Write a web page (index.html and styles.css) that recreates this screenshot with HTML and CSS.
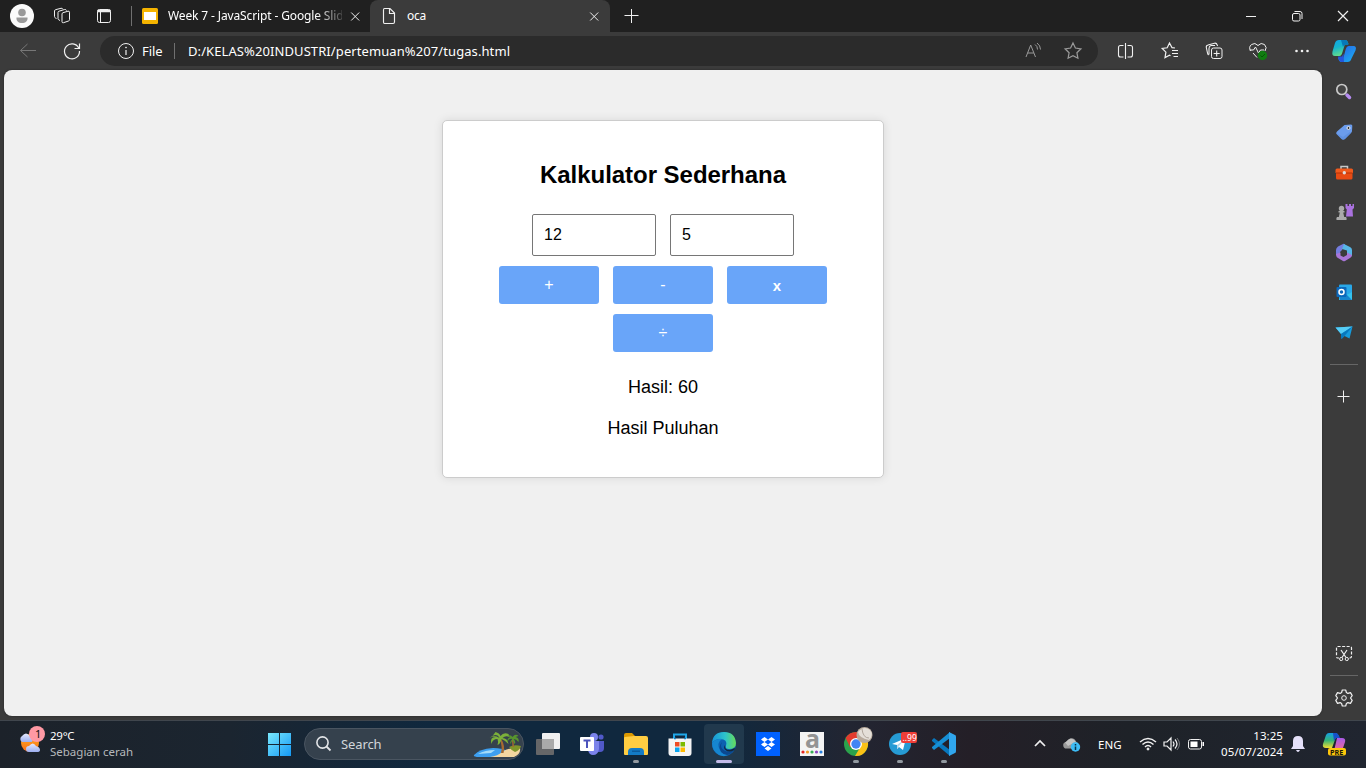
FILE: index.html
```html
<!DOCTYPE html>
<html lang="en">
<head>
<meta charset="utf-8">
<title>oca</title>
<link rel="stylesheet" href="styles.css">
</head>
<body>
<div class="screen">
  <header class="titlebar">
    <svg class="ic avatar" viewBox="0 0 24 24"><circle cx="12" cy="12" r="12" fill="#fafafa"/><circle cx="12" cy="8.500" r="3.800" fill="#999"/><path d="M6.500 13.500h11c.5 3.500-2 5.500-5.500 5.500s-6-2-5.500-5.500z" fill="#999"/></svg>
    <svg class="ic workspaces line" viewBox="0 0 24 24"><path d="M12 10q0-1 1-1.300l5-1.500q1.500-.3 1.500 1v7.500q0 1-1 1.300l-5 1.700q-1.500.3-1.500-1zM10 16.500l-1-.5q-1-.5-1-1.500V8.500q0-1 1-1.300l5.500-1.700q1.500-.3 2 1M6.500 14.500l-1-.5q-1-.5-1-1.500V7q0-1 1-1.300L11 4.300q1.300-.3 1.800.7"/></svg>
    <svg class="ic tabs-menu line" viewBox="0 0 24 24"><rect x="5.500" y="5.500" width="13" height="13" rx="2"/><path d="M5.500 7h13" stroke-width="2.500"/><path d="M8.500 8v10"/></svg>
    <i class="sep tall"></i>
    <svg class="slides" viewBox="0 0 16 16"><rect width="16" height="16" rx="1.500" fill="#f5b400"/><rect x="2" y="4" width="12" height="8" fill="#fff"/></svg>
    <span class="tab-title faded">Week 7 - JavaScript - Google Slid</span>
    <svg class="tab-close line" viewBox="0 0 20 20"><path d="m6.200 6.500 8 8m-8 0 8-8"/></svg>
    <div class="tab">
      <svg class="file line" viewBox="0 0 20 20"><path d="M5.500 2.500h5.500l4.500 4.500v9q0 1.500-1.500 1.500H5.500Q4.500 17.500 4.500 16V4q0-1.500 1-1.500zM10.500 2.500V7.500h5" stroke-width="1.150"/></svg>
      <span class="tab-title">oca</span>
      <svg class="tab-close line last" viewBox="0 0 20 20"><path d="m6.200 6.500 8 8m-8 0 8-8"/></svg>
    </div>
    <svg class="ic new-tab line" viewBox="0 0 24 24"><path d="M11.500 5v14M4.500 11.500h14"/></svg>
    <div class="window-buttons">
      <svg viewBox="0 0 46 32" class="line"><path d="M18 16.500h10"/></svg>
      <svg viewBox="0 0 46 32" class="line"><rect x="18.500" y="13.500" width="7.500" height="7.500" rx="1.500"/><path d="M20.500 11.500h5.500q2 0 2 2v5.500"/></svg>
      <svg viewBox="0 0 46 32" class="line"><path d="m18 11 10 10m-10 0 10-10" stroke-width="1.200"/></svg>
    </div>
  </header>

  <nav class="toolbar">
    <svg class="ic back line dim" viewBox="0 0 24 24"><path d="M20 11.500H4.500m7-6.500-7 6.500 7 6.500"/></svg>
    <svg class="ic refresh line" viewBox="0 0 24 24"><path d="M18.700 9A7.500 7.500 0 1 0 19.500 12M19.500 4.500v5h-5" stroke-width="1.200"/></svg>
    <div class="address">
      <svg class="info line" viewBox="0 0 20 20"><circle cx="10" cy="10" r="7.500"/><path d="M10 9v5" stroke-width="1.200"/><circle cx="10" cy="6.500" r=".5"/></svg>
      <span class="scheme">File</span>
      <i class="sep"></i>
      <span class="url">D:/KELAS%20INDUSTRI/pertemuan%207/tugas.html</span>
      <svg class="ic read line mid" viewBox="0 0 24 24"><path d="m5 18 4.700-12L14.500 18M6.700 14h6.100M14 5.500q2.500 1.500 2.500 5M16 4q3.500 2.500 3.500 6.500"/></svg>
      <svg class="ic star line mid" viewBox="0 0 24 24"><path d="m12 4 2.400 5 5.500.8-4 3.900 1 5.500-4.900-2.600-4.900 2.600 1-5.500-4-3.900 5.500-.8z" stroke-width="1.200"/></svg>
    </div>
    <svg class="ic split line" viewBox="0 0 24 24"><path d="M9.500 6.500h-3q-2 0-2 2v7.500q0 2 2 2h3m4-11.500h3q2 0 2 2v7.500q0 2-2 2h-3M11.500 4v16" stroke-width="1.100"/></svg>
    <svg class="ic favs line" viewBox="0 0 24 24"><path d="m17 9-3-.4L11.500 4 9.200 8.800l-5 .7 3.700 3.600-.9 5.500 4.500-2.400 1 .6M14 11.500h6M14 14.500h6M15.500 17.500H20" stroke-width="1.200"/></svg>
    <svg class="ic collections line" viewBox="0 0 24 24"><rect x="9.500" y="9" width="10.500" height="10.500" rx="2"/><path d="M14.700 11.500v6m-3-3h6M6.500 16Q5.800 15.500 5.500 14L4.300 8.500Q4 6.500 6 6l6.500-1.800q2-.5 2.800 2l.2.8M7 15.500v-6q0-2.500 2-3h4" stroke-width="1.100"/></svg>
    <svg class="ic heart" viewBox="0 0 24 24"><path class="line" d="M5 12Q2 8.500 5.500 5.500 9 3 12 6.500 15 3 18.500 5.500 21.500 8.500 19 12M3.500 11h4l2-3 3 6 2-3H18M7 14l4 4.500" stroke-width="1.200"/><circle cx="16.500" cy="16.500" r="4.700" fill="#107c10"/><path d="m14.500 16.500 1.500 1.500 3-3" fill="none" stroke="#055505"/></svg>
    <svg class="ic dots" viewBox="0 0 24 24" fill="#f2f2f2"><circle cx="6.500" cy="12" r="1.300"/><circle cx="12" cy="12" r="1.300"/><circle cx="17.500" cy="12" r="1.300"/></svg>
    <svg class="ic copilot" viewBox="0 0 24 24"><defs>
      <linearGradient id="cpA" x2=".3" y2="1"><stop stop-color="#10a5e8"/><stop offset=".5" stop-color="#16b5cd"/><stop offset="1" stop-color="#62dc8c"/></linearGradient>
      <linearGradient id="cpB" x2="1" y2="1"><stop stop-color="#2b5ce6"/><stop offset="1" stop-color="#18b4f2"/></linearGradient></defs>
      <path d="M13 5h3.500q-1-4-3.500-4H7Q4 1 3 4L.5 12.500Q-.5 17 3 17h4.500q2 0 3-4z" fill="url(#cpA)"/><path d="M9 1h5q1.500 0 2.500 5H13q-1.500 0-2 2z" fill="#0878b8"/><path d="M11.500 18.500H6Q7 23 9.500 23h6q3 0 4-3.500l4-8Q25 7 21.500 7H17q-2.500 0-3.500 4z" fill="url(#cpB)"/><path d="M6 17.500h4l1.500-3 .5 8.500H10q-3 0-4-5.500z" fill="#2456dd"/></svg>
  </nav>

  <div class="workspace">
    <main class="page">
      <section class="calculator">
        <h2>Kalkulator Sederhana</h2>
        <div class="row inputs"><input type="text" value="12"><input type="text" value="5"></div>
        <div class="row buttons"><button>+</button><button>-</button><button class="times">x</button><button>÷</button></div>
        <p class="result">Hasil: 60</p>
        <p class="result">Hasil Puluhan</p>
      </section>
    </main>
    <aside class="sidebar">
      <svg class="ic" viewBox="0 0 24 24"><path d="m15 15 2.500 2.500" stroke="#b58cf0" stroke-width="3.500" stroke-linecap="round"/><circle cx="9.800" cy="9.500" r="5" fill="#444" stroke="#c9c9c9" stroke-width="1.700"/></svg>
      <svg class="ic" viewBox="0 0 24 24"><path d="M12.500 5 19 4.500q1.500 0 1.300 1.500l-.3 5q0 1-1 2l-6 6q-2 1.500-3.500 0l-5-5Q3.500 13 5 11.500z" fill="#6b9cec"/><path d="m4 13 5.500 6q2 1.500 3.500 0l6-6-1-1-7 5z" fill="#5386d8" opacity=".5"/><circle cx="16.500" cy="8" r="1.500" fill="#333" stroke="#e8edf4"/></svg>
      <svg class="ic" viewBox="0 0 24 24"><path d="M9 9V6.500h6.500V9" fill="none" stroke="#c8c8c8" stroke-width="1.500"/><rect x="4" y="9" width="16.500" height="10.500" rx="1.500" fill="#e84b13"/><path d="M3.500 10Q3.500 8.500 5 8.500h14.500Q21 8.500 21 10v3H3.500z" fill="#f05a1d"/><path d="M4 13h16.500" stroke="#b53207"/><circle cx="12.300" cy="12.700" r="1.700" fill="#ddd"/></svg>
      <svg class="ic" viewBox="0 0 24 24"><path d="M13.500 4h2v2H17V4h2v2h1.500V4H22v4l-1.500 1.500.5 7h-7l.8-7L13.500 8z" fill="#aa72df"/><g fill="#aaa"><circle cx="9.500" cy="8.500" r="2.700"/><path d="M6.500 11h6v1.500h-1.300l1 4.500h1.800q1 1 .5 3h-10q-.5-2 .5-3h1.800l1-4.500H6.500z"/></g></svg>
      <svg class="ic m365" viewBox="0 0 24 24"><path d="m6 5.500 5-2.500q1-.5 2 .5L10 9l-2 2v6l-3-2q-1-.5-1-2V9q0-2 2-3.500z" fill="#747ddf"/><path d="m12 3 6 3q2 1 2 3v6l-5-3V9.500L10 8z" fill="#56b6e7"/><path d="m4 13 4.500-1.500v3l3 1.500 3.500-2v-2.500l5 2.500q0 2-2 3l-5 3q-1 .5-2 0l-5-3q-2-1-2-4z" fill="#a976d8"/></svg>
      <svg class="ic" viewBox="0 0 24 24"><rect x="7" y="4.500" width="13" height="15" rx="1" fill="#29a8e8"/><path d="m7 13 6 3 7-4v8H7z" fill="#34c2ec"/><path d="M7 15h8l5 5H8z" fill="#1684cd"/><rect x="4.500" y="7" width="10" height="10" rx="1" fill="#0b68bb"/><circle cx="9.500" cy="12" r="2.500" fill="none" stroke="#fff" stroke-width="1.500"/></svg>
      <svg class="ic" viewBox="0 0 24 24"><path d="m3.500 7.500 17-1-3 12-5-2.500-3 3-.5-5z" fill="#159bdc"/><path d="m3.500 7.500 17-1L9 14z" fill="#56cdf6"/><path d="m9.500 19-.5-5 11.500-7.500-8 9.500z" fill="#0878bd"/></svg>
      <hr>
      <svg class="ic plus line" viewBox="0 0 24 24"><path d="M11.500 6.500v12M5.500 12.500h12"/></svg>
      <svg class="ic snip line" viewBox="0 0 24 24"><path d="M7 17H5.500Q4.500 17 4.500 15V7q0-1.500 1.500-1.500h12q1.500 0 1.500 1.500v8q0 2-1.500 2H17" stroke-dasharray="3 1.500" stroke-width="1.200"/><path d="m9 9 5 7.500m1-7.500-5 7.500" stroke-width="1.200"/><circle cx="9.200" cy="18" r="1.600"/><circle cx="14.800" cy="18" r="1.600"/></svg>
      <hr class="lower">
      <svg class="ic gear line" viewBox="0 0 24 24"><path d="M10.300 4h3.400l.7 2.500 1.500.9 2.600-.8 1.700 3-1.700 2.400 1.700 2.400-1.700 3-2.600-.8-1.500.9-.7 2.500h-3.400l-.7-2.500-1.500-.9-2.600.8-1.700-3L5.500 12 3.800 9.600l1.700-3 2.600.8 1.500-.9z" stroke-linejoin="round" stroke-width="1.200"/><circle cx="12" cy="12" r="2.300"/></svg>
    </aside>
  </div>

  <footer class="taskbar">
    <svg class="weather" viewBox="0 0 30 30"><defs><linearGradient id="sun" x2="0" y2="1"><stop stop-color="#ffb21e"/><stop offset="1" stop-color="#f76b1c"/></linearGradient><linearGradient id="cloud" x2="0" y2="1"><stop stop-color="#e6eaff"/><stop offset="1" stop-color="#9baef0"/></linearGradient></defs><circle cx="13" cy="17" r="9" fill="url(#sun)"/><path d="M5 16a3.500 3.500 0 0 1 0-6q4-5 8 0 4 2 2 6z" fill="url(#cloud)"/><path d="M12 26a3 3 0 0 1 0-6q4-5 7 0 4 1 4 4 0 2-3 2z" fill="url(#cloud)"/><circle cx="20" cy="8" r="8" fill="#ff99a4"/><text x="18" y="12" font-size="11" fill="#111">1</text></svg>
    <div class="weather-text"><span>29°C</span><span class="soft">Sebagian cerah</span></div>
    <svg class="app start" viewBox="0 0 24 24"><defs><linearGradient id="win" gradientUnits="userSpaceOnUse" x1="0" y1="0" x2="24" y2="24"><stop stop-color="#7beafd"/><stop offset="1" stop-color="#1297f5"/></linearGradient></defs><path d="M0 1h11v11H0zm12 0h11v11H12zM0 13h11v11H0zm12 0h11v11H12z" fill="url(#win)"/></svg>
    <div class="search">
      <svg class="search-icon" viewBox="0 0 18 18"><circle cx="7.500" cy="7.500" r="5.600" fill="none" stroke="#e2e4e7" stroke-width="1.600"/><path d="m11.500 11.500 4 4" stroke="#e2e4e7" stroke-width="1.800"/></svg>
      <span>Search</span>
      <svg class="island" viewBox="0 0 49 28"><path d="M1 25q5-6 19-7 12 0 20 6l-6 3H6q-6 0-5-2z" fill="#3d9ff0"/><path d="M5 24q7-4 17-4l-4 3z" fill="#a4dcfa"/><path d="M17 27q8-1 12-5 8-5 18-4 1 6-6 9z" fill="#f3d6a0"/><path d="M36 17q5-3 12-1-1 4-6 6-4-2-6-5z" fill="#7f952a"/><path d="M26 8q4 6 2 15h2.500q2-8-3-15zM39 9l.5 8H41l-.7-8z" fill="#a66a31"/><path d="M26.500 8q-2-5-7-2l3-4q4 1 5 4 3-4 8-2l1 3q-4-2-7 1 5 0 6 6-4-4-7-5-1 5-4 6 1-4 0-6-5 0-6 5-2-7 4-7-3-1-6 1 4-4 10 0z" fill="#7cb13a"/><path d="M39.500 9q-4-1-5 3-1-4 3-5l-3-1q3-2 5 1 3-4 6-1l-3 1q4 1 3 5-2-3-5-3 3 3 1 5l-2-4-2 4q-1-3 2-5z" fill="#58952e"/></svg>
    </div>
    <div class="apps">
      <div class="slot"><svg class="app" viewBox="0 0 24 24"><rect x="6" y="1" width="18" height="16" rx="1" fill="#f0f0f0"/><rect y="7" width="18" height="16" rx="1" fill="#656668"/><path d="M6 7h12v10H6z" fill="#aaa"/></svg></div>
      <div class="slot"><svg class="app" viewBox="0 0 24 24"><circle cx="14" cy="5" r="4" fill="#7b83eb"/><circle cx="21" cy="5" r="2.600" fill="#5059c9"/><path d="M16 9h8v7q0 4-4 4h-4z" fill="#5059c9"/><path d="M8 9h11v8q-1 6-6 6-4 0-5-5z" fill="#7b83eb"/><rect y="5" width="14" height="14" rx="1" fill="#fff"/><path d="M3.500 8.500h7M7 8.500V16" stroke="#4b53bc" stroke-width="2"/></svg></div>
      <div class="slot open"><svg class="app" viewBox="0 0 24 24"><path d="M0 3q0-2 2-2h6l3 3v5H0z" fill="#dc9900"/><path d="M0 6q0-1 1-1l9-1h12q2 0 2 2v16q0 1-1 1H1q-1 0-1-1z" fill="#ffcd42"/><path d="M4 23v-3q0-4 4-4h8q4 0 4 4v3z" fill="#137bc6"/><path d="M8 18.500h8v1.500H8z" fill="#0b5b9d"/></svg></div>
      <div class="slot"><svg class="app" viewBox="0 0 24 24"><path d="M6 7V2.500h12V7" fill="none" stroke="#20a7e8" stroke-width="2"/><path d="M.5 6.500h23V21q0 3-3 3h-17q-3 0-3-3z" fill="#f4f4f4"/><path d="M6 6.500h2M16 6.500h2" stroke="#1582c4" stroke-width="1.500"/><path fill="#ef4c24" d="M7 10h4.500v4.500H7z"/><path fill="#7cbb00" d="M12.500 10H17v4.500h-4.500z"/><path fill="#09a4ef" d="M7 15.500h4.500V20H7z"/><path fill="#ffba00" d="M12.500 15.500H17V20h-4.500z"/></svg></div>
      <div class="slot active"><svg class="app" viewBox="0 0 24 24"><defs><linearGradient id="edge"><stop stop-color="#1794d7"/><stop offset=".55" stop-color="#2dc3cc"/><stop offset="1" stop-color="#67dc58"/></linearGradient></defs><circle cx="12" cy="12" r="12" fill="#0d61b1"/><path d="M0 11Q1 0 12 0q11 0 12 11 0 6-7 6-4 0-3-3 2-7-6-7-5 0-8 4z" fill="url(#edge)"/><path d="M0 11q5-5 10-4-6 4-2 11 4 6 11 3-5 5-12 2Q0 19 0 11z" fill="#1686d0"/><path d="M10 10q-3 6 3 9 4 2 9-1-6 9-13 2-3-6 1-10z" fill="#0b4890"/><path d="M13 13q-1 5 5 5l5-2-.5 2q-6 3-9 0-2.500-2-.5-5z" fill="#11263a"/></svg></div>
      <div class="slot"><svg class="app" viewBox="0 0 24 24"><path fill="#0061fe" d="M0 0h24v24H0z"/><path d="m8.500 5 3.500 2.500L8.500 10 5 7.500zm7 0L19 7.500 15.500 10 12 7.500zm-7 5 3.500 2.500L8.500 15 5 12.500zm7 0 3.500 2.500-3.500 2.500-3.500-2.500zM12 14l3.500 2.500L12 19l-3.500-2.500z" fill="#fff"/></svg></div>
      <div class="slot"><svg class="app" viewBox="0 0 24 24"><path fill="#f4f4f4" d="M0 0h24v24H0z"/><text x="5" y="15.500" font-size="25" font-weight="700" fill="#949494">a</text><circle cx="3" cy="20" r="1.600" fill="#e52521"/><circle cx="7.500" cy="20" r="1.600" fill="#f59b23"/><circle cx="12" cy="20" r="1.600" fill="#36ae56"/><circle cx="16.500" cy="20" r="1.600" fill="#8b45bd"/><circle cx="21" cy="20" r="1.600" fill="#2880df"/></svg></div>
      <div class="slot open"><svg class="app" viewBox="0 0 24 24"><circle cx="12" cy="12" r="12" fill="#2ba24c"/><path d="M1.600 6A12 12 0 0 1 22.400 6L12 12 6 15z" fill="#e33b2e"/><path d="M22.400 6A12 12 0 0 1 11 24l6-10-5-8z" fill="#fbc116"/><circle cx="12" cy="12" r="6" fill="#fff"/><circle cx="12" cy="12" r="4.700" fill="#4285f4"/><circle cx="20.500" cy="3" r="8" fill="#b7aa9c"/><path d="M14 0q6-7 12-2 4 5-1 10-10-2-11-8z" fill="#e4dfd8"/><path d="M18-3q1 9 7 9" stroke="#b0a69c" fill="none"/></svg></div>
      <div class="slot open"><svg class="app" viewBox="0 0 24 24"><circle cx="12" cy="12" r="11" fill="#269bd4"/><path d="m4 12 14-6-3 12-4-3-2 2v-4z" fill="#fff"/><path d="m9 13 7-5-5 6-2 3z" fill="#b6d6e8"/><rect x="13" y="0" width="16" height="11" rx="2" fill="#ef3e38"/><text x="14.500" y="8.700" font-size="8.500" fill="#fff">..99</text></svg></div>
      <div class="slot open"><svg class="app" viewBox="0 0 24 24"><path d="m0 8 2-2L18 18v6L0 9z" fill="#0877bd"/><path d="m0 16 2 2L18 6V0L0 15z" fill="#168fd5"/><path d="m17 0 6 3q1 0 1 2v14q0 2-1 2l-6 3z" fill="#30a6ed"/></svg></div>
    </div>
    <div class="tray">
      <svg class="ic chev line" viewBox="0 0 24 24"><path d="m7 14 5-5 5 5" stroke-width="1.700"/></svg>
      <svg class="ic onedrive" viewBox="0 0 24 24"><path d="M8 16.500H7A3 3 0 0 1 6 10q4-6 9-1 3 1 3 4l-3 3.500z" fill="#999"/><path d="m5 10.500 5-4q4-1 6 3L8 14z" fill="#d0d0d0" opacity=".75"/><circle cx="15.500" cy="15" r="4.700" fill="#3dbbf5"/><path d="M15.500 14.500V18m0-6v1.400" stroke="#07354c" stroke-width="1.500"/></svg>
      <span class="lang">ENG</span>
      <svg class="ic wifi line" viewBox="0 0 24 24"><path d="M4 10q8-7 16 0M6.500 12.500q5.500-5 11 0M9 15q3-3 6 0" stroke-width="1.500"/><circle cx="12" cy="17" r="1" fill="#fff"/></svg>
      <svg class="ic sound line" viewBox="0 0 24 24"><path d="M5 10h3l4-4v12l-4-4H5zM14 9.500q2 2.500 0 5M16 7.500q4 4.500 0 9" stroke-width="1.200"/><path d="M18 6q5 6 0 12" opacity=".4"/></svg>
      <svg class="ic battery" viewBox="0 0 24 24"><rect x="4.500" y="7.500" width="13" height="9.500" rx="2" class="line" stroke-width="1.300"/><path d="M6.500 9.500h7V15h-7zM18.500 10H20v4h-1.500z" fill="#fff"/></svg>
      <div class="clock"><span>13:25</span><span>05/07/2024</span></div>
      <svg class="bell" viewBox="0 0 16 18"><path d="M3 6q0-5 5-5t5 5v5l2 3H1l2-3zM6 15h4q-1 2-2 2t-2-2z" fill="#e5e1fa"/></svg>
      <svg class="pre" viewBox="0 0 26 26"><defs><linearGradient id="preA" x2="0" y2="1"><stop stop-color="#149fe6"/><stop offset=".5" stop-color="#35b475"/><stop offset="1" stop-color="#f2dc30"/></linearGradient><linearGradient id="preB" x2="0" y2="1"><stop stop-color="#a85ae8"/><stop offset="1" stop-color="#f06b91"/></linearGradient></defs><path d="M7 2h6q3 0 4 4h-3l-4 11H4q-4 0-3-4l3-9q1-2 3-2z" fill="url(#preA)"/><path d="M11 2h3q2 0 4 5h-4l-2 3z" fill="#1552c9"/><path d="M15 7h5q4 0 3 4l-3 9h-8z" fill="url(#preB)"/><rect x="6" y="17" width="18" height="7.500" rx="2" fill="#ffc70b"/><text x="8" y="23.500" font-size="7.200" font-weight="700" fill="#19150a">PRE</text></svg>
    </div>
  </footer>
</div>
</body>
</html>
```
FILE: styles.css
```css
* { box-sizing: border-box; }
body { margin: 0; background: #3b3b3b; font-family: "Noto Sans", "Open Sans", sans-serif; color: #fff; overflow: hidden; }
svg { display: block; flex: none; overflow: visible; }
.screen { width: 1366px; height: 768px; display: flex; flex-direction: column; }
.ic { width: 24px; height: 24px; }
.line { fill: none; stroke: #f0f0f0; stroke-width: 1; }
.dim { stroke: #777; }
.mid { stroke: #9a9a9a; }
.sep { flex: none; width: 1px; height: 16px; background: #707070; }
.sep.tall { height: 20px; margin-left: 15px; }

.titlebar { height: 32px; flex: none; background: #202020; display: flex; align-items: center; }
.avatar { margin-left: 10px; }
.workspaces { margin-left: 16px; }
.tabs-menu { margin-left: 18px; }
.slides { width: 16px; height: 16px; margin-left: 10px; }
.tab-title { font-size: 12px; line-height: 16px; white-space: nowrap; }
.faded { width: 174px; margin: 0 3px 0 10px; overflow: hidden; letter-spacing: -.13px; -webkit-mask-image: linear-gradient(90deg, #000 148px, transparent 180px); mask-image: linear-gradient(90deg, #000 148px, transparent 180px); }
.tab-close, .file, .info { width: 20px; height: 20px; }
.tab { width: 240px; height: 32px; margin-left: 5px; padding: 0 6px 0 9px; display: flex; align-items: center; gap: 8px; background: #3b3b3b; border-radius: 8px 8px 0 0; }
.tab .tab-title { letter-spacing: -.3px; }
.last { margin-left: auto; }
.new-tab { margin-left: 10px; }
.window-buttons { display: flex; margin-left: auto; }
.window-buttons svg { width: 46px; height: 32px; }

.toolbar { height: 38px; flex: none; display: flex; align-items: center; }
.back { margin-left: 16px; }
.refresh { margin-left: 20px; }
.address { width: 998px; height: 30px; margin-left: 16px; padding: 0 13px 0 16px; display: flex; align-items: center; background: #2b2b2b; border-radius: 15px; }
.scheme { width: 26px; margin: 0 6px; font-size: 13px; letter-spacing: -.1px; }
.url { margin-left: 13px; font-size: 13px; letter-spacing: .09px; white-space: nowrap; }
.read { margin-left: auto; }
.star { margin-left: 16px; }
.split { margin-left: 16px; }
.favs, .collections, .heart, .dots { margin-left: 20px; }
.copilot { margin-left: 18px; }

.workspace { height: 650px; flex: none; display: flex; }
.page { width: 1318px; height: 646px; margin-left: 4px; padding-top: 50px; background: #f0f0f0; border-radius: 8px; font-family: "Liberation Sans", Arial, sans-serif; color: #000; box-shadow: 0 0 2px #222; }
.calculator { width: 442px; height: 358px; margin: 0 auto; padding: 20px; text-align: center; background: #fff; border: 1px solid #ccc; border-radius: 5px; box-shadow: 0 0 10px rgba(0, 0, 0, .1); }
.calculator h2 { margin: 20px 0 25px; font-size: 24px; line-height: 28px; letter-spacing: -.04px; }
.row { display: flex; flex-wrap: wrap; justify-content: center; gap: 10px 14px; }
.inputs input { width: 124px; height: 42px; padding: 10px 11px; border: 1px solid #767676; border-radius: 2px; font: 16px "Liberation Sans", Arial, sans-serif; }
.buttons { margin: 10px 30px 25px; }
.buttons button { width: 100px; height: 38px; padding: 0; border: 0; border-radius: 3px; background: #69a5f9; color: #fff; font: 16px "Liberation Sans", Arial, sans-serif; }
.buttons .times { font-weight: 700; font-size: 15px; }
.result { margin: 0 0 20px; font-size: 18px; line-height: 21px; }

.sidebar { width: 44px; height: 646px; padding-top: 10px; display: flex; flex-direction: column; align-items: center; }
.sidebar .ic { margin-bottom: 16px; }
.sidebar .m365 { margin: 1px 0 15px; }
.sidebar hr { flex: none; width: 28px; height: 1px; margin: 4px 0 19px; border: 0; background: #666; }
.sidebar .snip { margin: auto 0 10px; }
.sidebar .lower { margin: 0 0 10px; }
.sidebar .gear { margin: 0 0 6px; }

.taskbar { height: 48px; flex: none; display: flex; align-items: center; box-shadow: inset 0 1px #40464d; background: linear-gradient(90deg, #1c222a 0, #1b2530 230px, #10283e 430px, #10283e 720px, #222532 850px, #241f27 970px, #1e2228 1130px, #202530 100%); }
.weather { width: 30px; height: 30px; margin: -6px 3px 0 17px; }
.weather-text { width: 218px; display: flex; flex-direction: column; font-size: 11.500px; line-height: 16px; letter-spacing: -.25px; }
.soft { color: #b5b8bb; letter-spacing: 0; }
.app { width: 24px; height: 24px; }
.start { margin-top: -1px; }
.search { width: 220px; height: 32px; margin-left: 12px; padding-left: 10px; display: flex; align-items: center; background: #35414d; border: 1px solid #4a5561; border-radius: 16px; font-size: 13px; color: #d2d6da; letter-spacing: -.1px; }
.search-icon { width: 18px; height: 18px; margin-right: 8px; }
.island { width: 49px; height: 28px; margin: 0 1px 0 auto; }
.apps { display: flex; gap: 4px; margin-left: 4px; }
.slot { width: 40px; height: 40px; display: grid; place-items: center; border-radius: 4px; position: relative; }
.slot.active { background: #21394d; }
.open::after, .active::after { content: ""; position: absolute; bottom: 1px; left: 17px; width: 6px; height: 3px; border-radius: 2px; background: #9299a0; }
.active::after { left: 12px; width: 16px; background: #c3bbe9; }
.tray { display: flex; align-items: center; margin-left: 64px; }
.onedrive { margin-left: 8px; }
.lang { width: 24px; margin-left: 14px; font-size: 11.500px; letter-spacing: 0; }
.wifi { margin-left: 14px; }
.sound { margin-left: -1px; }
.battery { margin-left: 1px; }
.clock { width: 75px; display: flex; flex-direction: column; text-align: right; font-size: 11.500px; line-height: 16px; letter-spacing: .07px; white-space: nowrap; }
.bell { width: 16px; height: 18px; margin-left: 7px; }
.pre { width: 26px; height: 26px; margin-left: 16px; }
```
